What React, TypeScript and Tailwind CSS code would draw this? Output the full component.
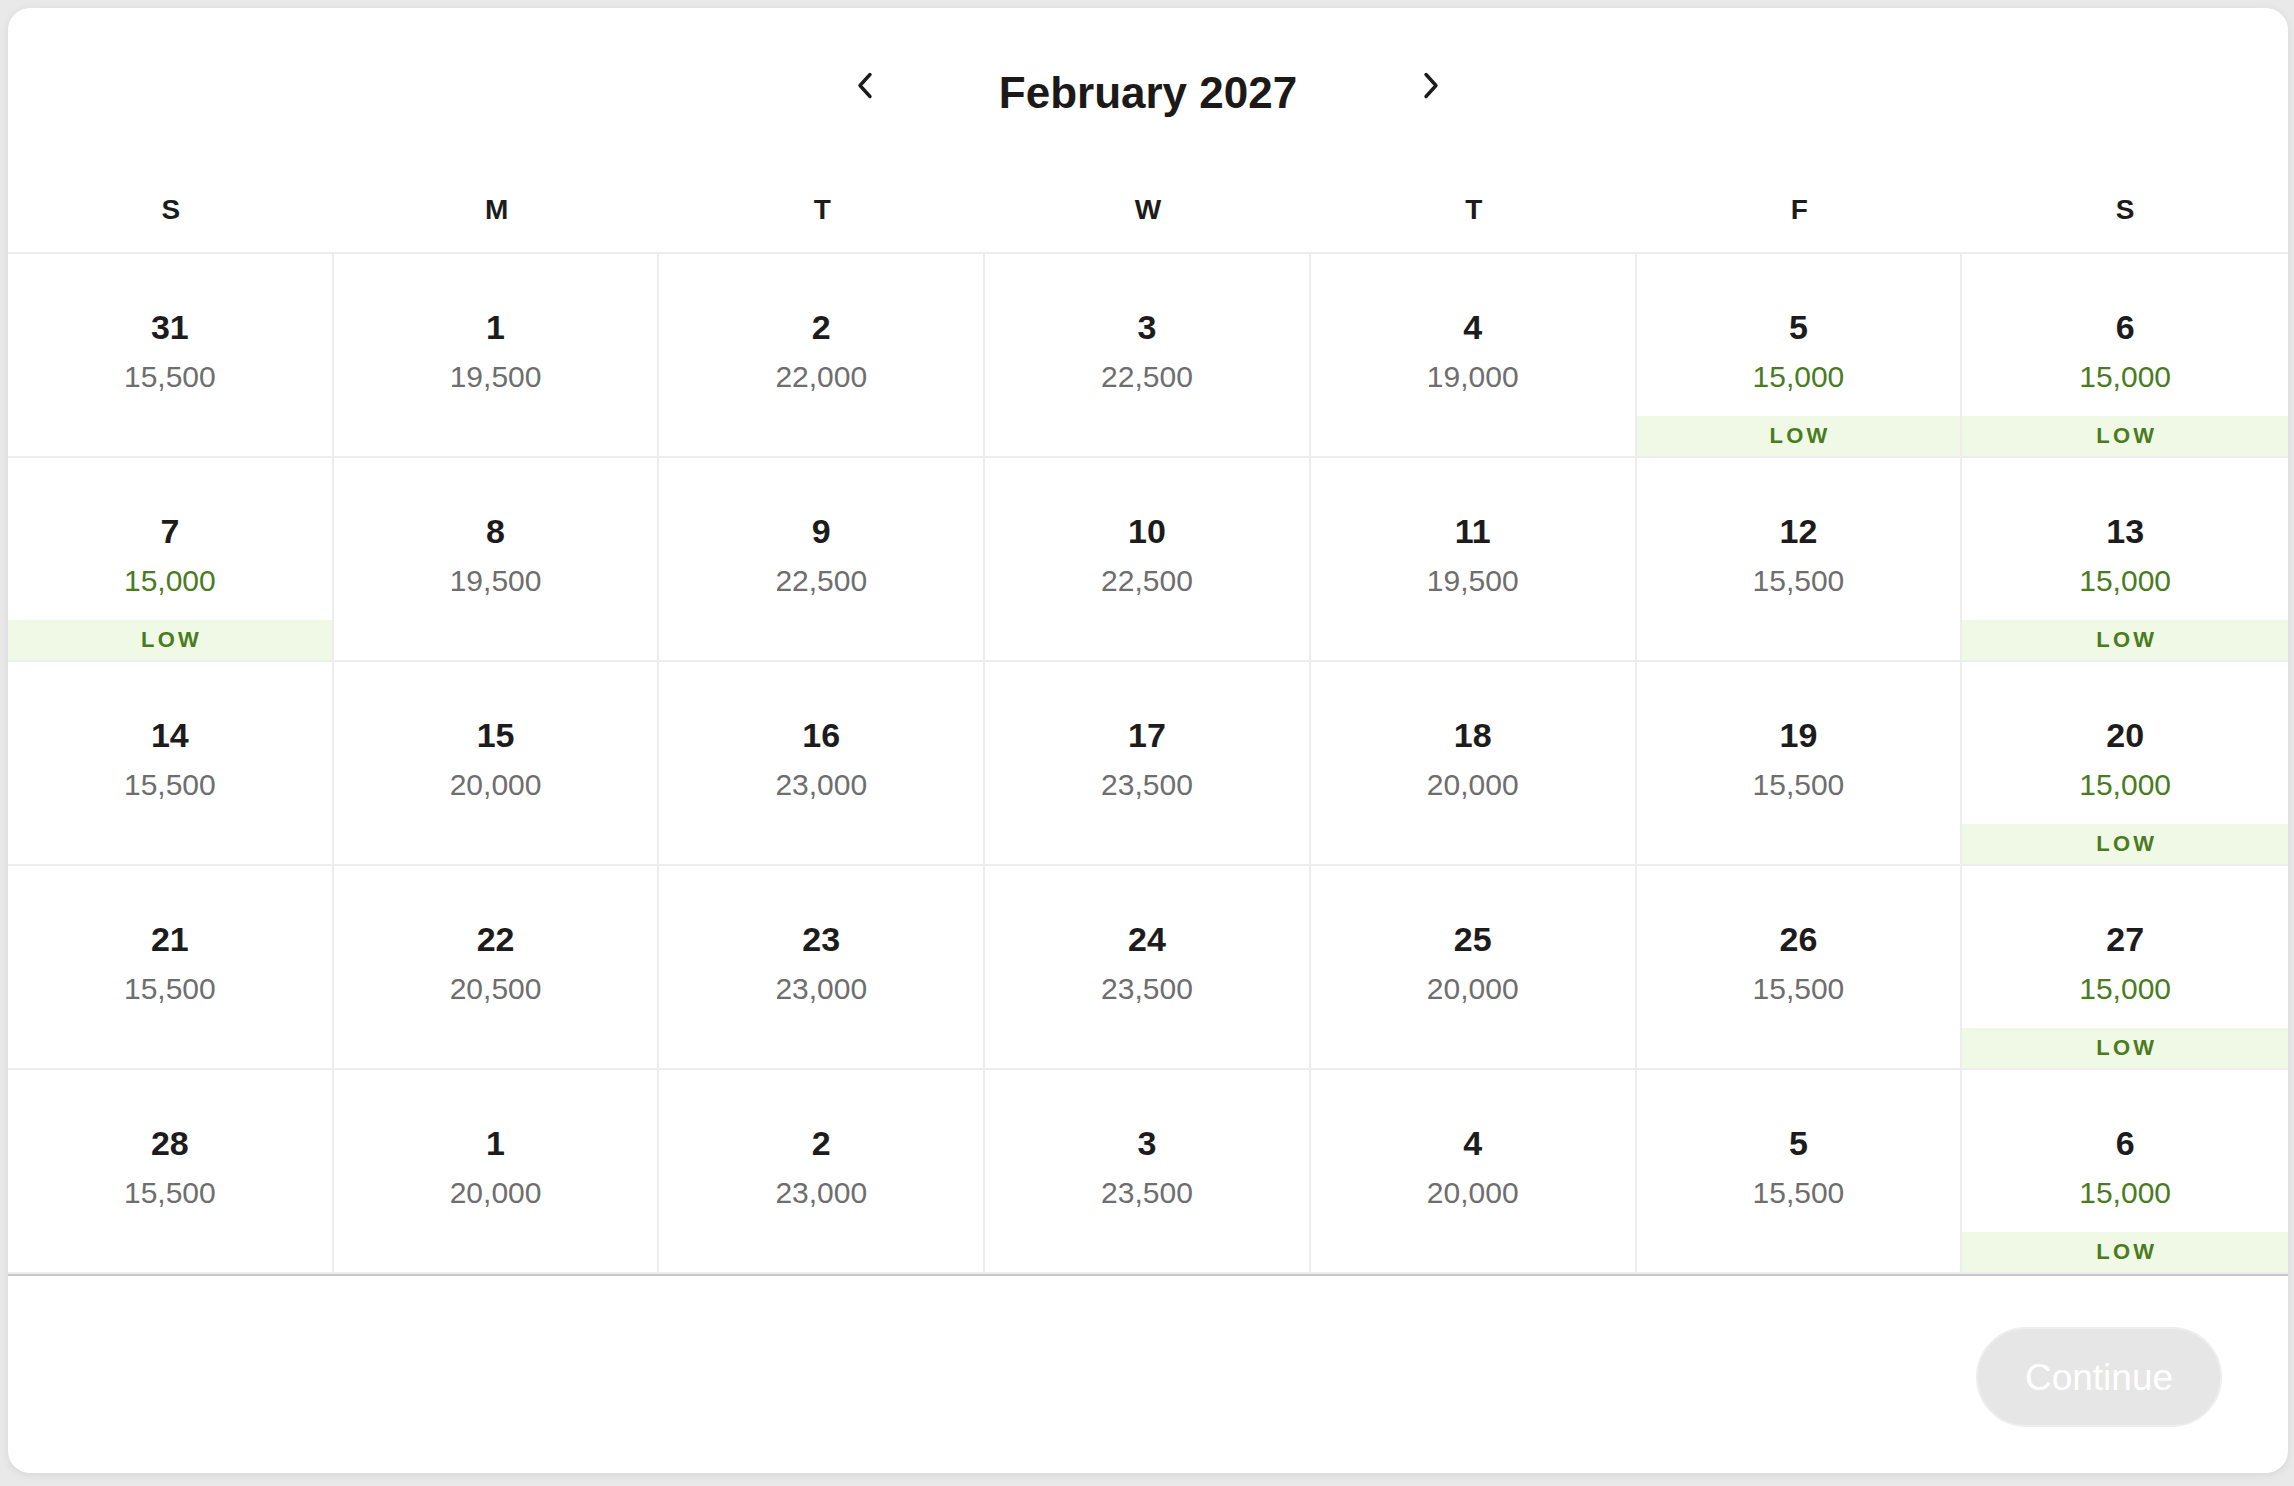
import React from 'react';

type Day = { date: number; price: string; low?: boolean };

const weekdays = ['S', 'M', 'T', 'W', 'T', 'F', 'S'];

const weeks: Day[][] = [
  [
    { date: 31, price: '15,500' },
    { date: 1, price: '19,500' },
    { date: 2, price: '22,000' },
    { date: 3, price: '22,500' },
    { date: 4, price: '19,000' },
    { date: 5, price: '15,000', low: true },
    { date: 6, price: '15,000', low: true },
  ],
  [
    { date: 7, price: '15,000', low: true },
    { date: 8, price: '19,500' },
    { date: 9, price: '22,500' },
    { date: 10, price: '22,500' },
    { date: 11, price: '19,500' },
    { date: 12, price: '15,500' },
    { date: 13, price: '15,000', low: true },
  ],
  [
    { date: 14, price: '15,500' },
    { date: 15, price: '20,000' },
    { date: 16, price: '23,000' },
    { date: 17, price: '23,500' },
    { date: 18, price: '20,000' },
    { date: 19, price: '15,500' },
    { date: 20, price: '15,000', low: true },
  ],
  [
    { date: 21, price: '15,500' },
    { date: 22, price: '20,500' },
    { date: 23, price: '23,000' },
    { date: 24, price: '23,500' },
    { date: 25, price: '20,000' },
    { date: 26, price: '15,500' },
    { date: 27, price: '15,000', low: true },
  ],
  [
    { date: 28, price: '15,500' },
    { date: 1, price: '20,000' },
    { date: 2, price: '23,000' },
    { date: 3, price: '23,500' },
    { date: 4, price: '20,000' },
    { date: 5, price: '15,500' },
    { date: 6, price: '15,000', low: true },
  ],
];

const Chevron: React.FC<{ dir: 'left' | 'right' }> = ({ dir }) => (
  <svg width="18" height="27" viewBox="0 0 18 27" fill="none">
    <path
      d={dir === 'left' ? 'M14 2.5 L4 13.5 L14 24.5' : 'M4 2.5 L14 13.5 L4 24.5'}
      stroke="#1c1c1c"
      strokeWidth="3.4"
      strokeLinecap="round"
      strokeLinejoin="round"
    />
  </svg>
);

const DayCell: React.FC<{ day: Day; last: boolean }> = ({ day, last }) => (
  <div
    className={`flex flex-col items-center h-[204px] border-b-2 border-[#ededed] ${last ? '' : 'border-r-2'}`}
  >
    <span className="pt-[56px] text-[34px] leading-none font-bold text-[#1c1c1c]">{day.date}</span>
    <span
      className={`mt-[18px] text-[30px] leading-none ${day.low ? 'text-[#4a7c1f]' : 'text-[#6e6e6e]'}`}
    >
      {day.price}
    </span>
    {day.low && (
      <div className="mt-auto w-full h-[40px] bg-[#f0f9e6] flex items-center justify-center">
        <span className="text-[22px] leading-none font-bold tracking-[0.15em] pl-[0.15em] text-[#4a7c1f]">
          LOW
        </span>
      </div>
    )}
  </div>
);

export default function App() {
  return (
    <div
      className="w-[2294px] h-[1486px] bg-[#e9e9e9] pt-[8px] pl-[8px] pr-[6px] pb-[13px]"
      style={{ fontFamily: '"Liberation Sans", Arial, sans-serif' }}
    >
      <div className="w-full h-full bg-white rounded-[22px] shadow-[0_2px_10px_rgba(0,0,0,0.08)] flex flex-col overflow-hidden">
        {/* Month nav */}
        <div className="pt-[41px] h-[121px] flex items-start justify-center">
          <div className="h-[80px] flex items-center">
            <button className="w-10 h-10 flex items-center justify-center -mt-[8px]">
              <Chevron dir="left" />
            </button>
            <div className="w-[526px] mt-[8px] text-center text-[44px] leading-none font-semibold text-[#1c1a18]">
              February 2027
            </div>
            <button className="w-10 h-10 flex items-center justify-center -mt-[8px]">
              <Chevron dir="right" />
            </button>
          </div>
        </div>

        {/* Weekday header */}
        <div className="grid grid-cols-7 h-[125px] items-center pt-[39px] border-b-2 border-[#ededed]">
          {weekdays.map((w, i) => (
            <div key={i} className="text-center text-[28px] leading-none font-bold text-[#1c1c1c]">
              {w}
            </div>
          ))}
        </div>

        {/* Days grid */}
        <div className="grid grid-cols-7">
          {weeks.map((week, wi) =>
            week.map((day, di) => <DayCell key={`${wi}-${di}`} day={day} last={di === 6} />),
          )}
        </div>

        {/* Footer */}
        <div className="flex-1 border-t-2 border-[#c6c6c6] flex items-center justify-end pt-[5px] pr-[66px]">
          <button className="w-[246px] h-[100px] rounded-full bg-[#e6e6e6] border-2 border-[#eeeeee] text-white text-[37px] leading-none">
            Continue
          </button>
        </div>
      </div>
    </div>
  );
}
